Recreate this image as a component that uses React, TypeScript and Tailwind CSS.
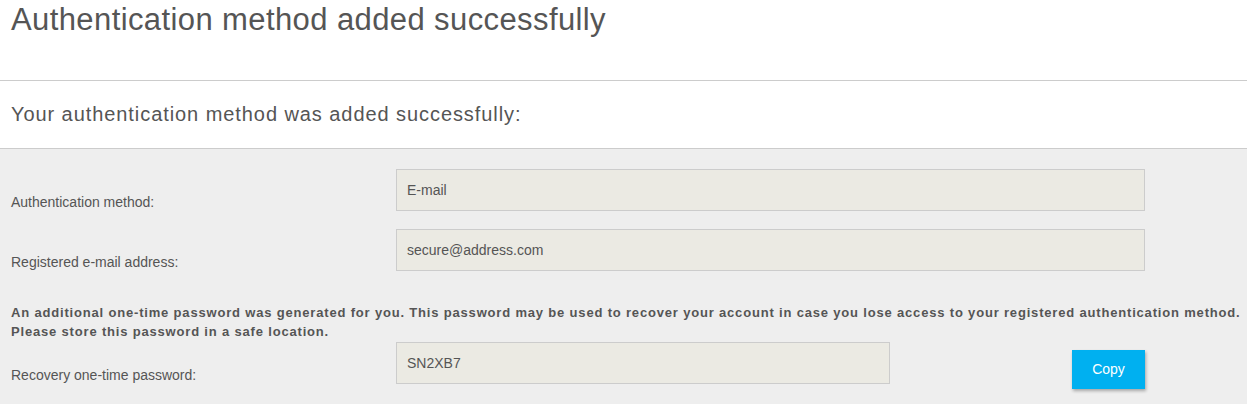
import React from 'react';

const FONT = "font-['Liberation_Sans',Arial,sans-serif]";

function Row({ label, children }: { label: string; children: React.ReactNode }) {
  return (
    <div className="flex items-start h-[42px]">
      <div className="w-[385px] shrink-0 pt-[24px] text-[14px] leading-[18px] text-[#555]">{label}</div>
      <div className="w-[749px]">{children}</div>
    </div>
  );
}

function Field({ value, className = '' }: { value: string; className?: string }) {
  return (
    <div className={`h-[42px] flex items-center px-[10px] bg-[#ebeae3] border border-[#cccccc] text-[14px] leading-[20px] text-[#555] ${className}`}>
      {value}
    </div>
  );
}

export default function App() {
  return (
    <div className={`${FONT} w-[1247px] h-[404px] overflow-hidden bg-white`}>
      <div className="h-[81px] border-b border-[#cccccc] pl-[11px] pt-[2px]">
        <h1 className="text-[31px] leading-[36px] tracking-[0.4px] text-[#555]">Authentication method added successfully</h1>
      </div>
      <div className="h-[68px] border-b border-[#cccccc] pl-[11px] pt-[21px]">
        <h2 className="text-[20px] leading-[24px] tracking-[0.93px] text-[#555]">Your authentication method was added successfully:</h2>
      </div>
      <div className="bg-[#eeeeee] h-[256px] pl-[11px] pt-[20px]">
        <div className="flex flex-col gap-[18px]">
          <Row label="Authentication method:">
            <Field value="E-mail" />
          </Row>
          <Row label="Registered e-mail address:">
            <Field value="secure@address.com" />
          </Row>
        </div>
        <p className="mt-[32px] text-[13px] leading-[19px] tracking-[0.82px] font-bold text-[#555] whitespace-nowrap">
          An additional one-time password was generated for you. This password may be used to recover your account in case you lose access to your registered authentication method.
          <br />
          Please store this password in a safe location.
        </p>
        <div className="mt-[1px]">
          <Row label="Recovery one-time password:">
            <div className="flex items-start">
              <Field value="SN2XB7" className="w-[494px]" />
              <button className="ml-auto mt-[8px] w-[73px] h-[39px] bg-[#00b0f0] text-white text-[14px] shadow-[1px_2px_3px_rgba(0,0,0,0.3)]">
                Copy
              </button>
            </div>
          </Row>
        </div>
      </div>
    </div>
  );
}
